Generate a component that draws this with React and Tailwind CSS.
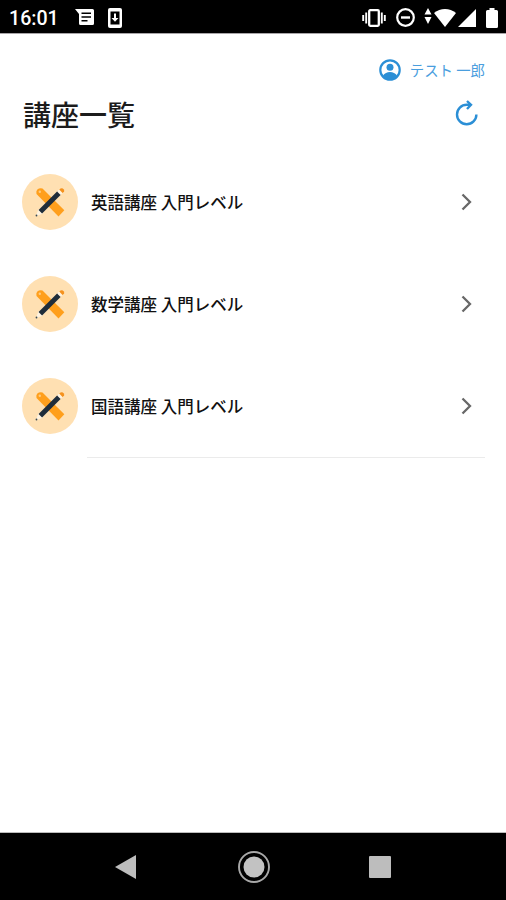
const courses = [
  { id: 1, name: "英語講座 入門レベル" },
  { id: 2, name: "数学講座 入門レベル" },
  { id: 3, name: "国語講座 入門レベル" },
];

function StatusBar() {
  return (
    <div className="h-[34px] shrink-0 bg-black border-b border-[#a8a5a8] flex items-center justify-between pl-[9px] pr-[8px] text-white">
      <div className="flex items-center pt-[2px]">
        <span className="w-[66px] pt-[2px] text-[19.600px] leading-5 font-medium font-[Roboto,sans-serif]">
          16:01
        </span>
        <svg width="19" height="17" viewBox="0 0 19 17" className="mr-[14px]">
          <path fill="#fff" d="M0 0h17.500Q19 0 19 1.500v13q0 1.500-1.500 1.500H5.500Q4 16 4 14.500V5z" />
          <path stroke="#000" strokeWidth="1.600" d="M6.500 4.300h9.500M6.500 8h9.500M6.500 11.700h6" />
        </svg>
        <svg width="14" height="20" viewBox="0 0 14 20">
          <rect width="14" height="20" rx="2" fill="#fff" />
          <rect x="2.500" y="3.500" width="9" height="13" fill="#000" />
          <path fill="#fff" d="M6 5.500h2V10h2.500L7 13.800 3.500 10H6z" />
        </svg>
      </div>
      <div className="flex items-center pt-[2px]">
        <svg width="24" height="18" viewBox="0 0 24 18" className="mr-[10px]">
          <rect x="7.200" y="1.200" width="9.600" height="15.600" rx="1" fill="none" stroke="#fff" strokeWidth="2.300" />
          <path stroke="#fff" strokeWidth="1.900" d="M4.200 3.500v11M19.800 3.500v11M1.200 6v6M22.800 6v6" />
        </svg>
        <svg width="19" height="19" viewBox="0 0 19 19" className="mr-[9px]">
          <circle cx="9.500" cy="9.500" r="8.300" fill="none" stroke="#fff" strokeWidth="2.200" />
          <path stroke="#fff" strokeWidth="2.400" d="M5 9.500h9" />
        </svg>
        <svg width="8" height="16" viewBox="0 0 8 16" className="mr-[2px] mb-[3px]">
          <path fill="#fff" d="M4 0l3.500 6.500h-7zM4 16L.5 9h7z" />
        </svg>
        <svg width="22" height="18" viewBox="0 0 22 18" className="mr-[2px]">
          <path fill="#fff" d="M11 18L0 4Q5 0 11 0t11 4z" />
        </svg>
        <svg width="18" height="18" viewBox="0 0 18 18" className="mr-[10px]">
          <path fill="#fff" d="M18 0v18H0z" />
        </svg>
        <svg width="12" height="20" viewBox="0 0 12 20">
          <path fill="#fff" d="M3.500 0h5v2h2Q12 2 12 3.500v15q0 1.500-1.500 1.500h-9Q0 20 0 18.500v-15Q0 2 1.500 2h2z" />
        </svg>
      </div>
    </div>
  );
}

function CourseIcon() {
  return (
    <div className="size-14 shrink-0 rounded-full bg-[#ffe0b2]">
      <svg width="56" height="56" viewBox="0 0 56 56">
        <path fill="#ff9f1c" d="M20.500 14.500L42.300 36.300 36.500 42.500 14.500 20q-.7-3 .8-4.500 2.200-1.800 5.200-1z" />
        <circle cx="17.800" cy="17.800" r="1.200" fill="#ffcc80" />
        <path fill="#fff3e0" d="M13.800 42.200l2.800-7.200 4.500 4.500z" />
        <path stroke="#1f2d3a" strokeWidth="5" d="M18.300 37.700L37.300 18.700" />
        <path stroke="#fff3e0" strokeWidth="5" d="M36.800 19.200l2-2" />
        <path fill="#f5921e" d="M37.300 15.400q1.500-1.500 3.500-1 2 .8 1.300 3l-1.500 1.500z" />
        <circle cx="14.500" cy="41.500" r=".9" fill="#37474f" />
      </svg>
    </div>
  );
}

function CourseRow({ course }) {
  return (
    <div className="h-[102px] flex items-center">
      <CourseIcon />
      <span className="ml-[13px] mb-px flex-1 text-[16.500px] leading-6 font-medium text-[#111]">
        {course.name}
      </span>
      <svg width="12" height="18" viewBox="0 0 12 18" className="mr-[12px]">
        <path fill="none" stroke="#686868" strokeWidth="2.300" d="M1.500 1.500L9 9l-7.500 7.500" />
      </svg>
    </div>
  );
}

function NavBar() {
  return (
    <div className="h-[68px] shrink-0 bg-black border-t border-[#bcbcbc] grid grid-cols-[115px_22px_101px_32px_99px_22px] items-center">
      <svg width="22" height="24" viewBox="0 0 22 24" className="col-start-2">
        <path fill="#bdbdbd" d="M21 0v24L0 12z" />
      </svg>
      <svg width="32" height="32" viewBox="0 0 32 32" className="col-start-4">
        <circle cx="16" cy="16" r="15" fill="none" stroke="#a8a8a8" strokeWidth="1.900" />
        <circle cx="16" cy="16" r="10.500" fill="#c2c2c2" />
      </svg>
      <div className="col-start-6 size-[22px] rounded-[1px] bg-[#bdbdbd]" />
    </div>
  );
}

export default function App() {
  return (
    <div className="w-full h-[900px] flex flex-col bg-white font-['Noto_Sans_CJK_JP',sans-serif]">
      <StatusBar />
      <main className="flex-1 pl-[22px] pr-[21px]">
        <div className="mt-6 h-6 flex items-center justify-end text-[#2b8fd6]">
          <svg width="22" height="22" viewBox="0 0 22 22" className="mr-[9px]">
            <circle cx="11" cy="11" r="9.700" fill="none" stroke="currentColor" strokeWidth="2.200" />
            <circle cx="11" cy="8.300" r="3.500" fill="currentColor" />
            <path fill="currentColor" d="M4 16.500q2.500-3.500 7-3.500t7 3.500q-2.500 4-7 4t-7-4z" />
          </svg>
          <span className="text-[14.400px] leading-6 text-[#4a9ede]">テスト 一郎</span>
        </div>
        <div className="mt-[12px] h-10 flex items-center justify-between">
          <h1 className="ml-[1px] text-[28px] leading-10 font-medium text-[#1c1c1c]">
            講座一覧
          </h1>
          <svg width="24" height="26" viewBox="0 0 24 26" className="mr-[6px] mb-[3px]">
            <path fill="none" stroke="#2b8fd6" strokeWidth="2.400" d="M21.400 14.500A9.700 9.700 0 1 1 11.700 4.800H16" />
            <path fill="none" stroke="#2b8fd6" strokeWidth="2.400" d="M12 1L16 4.800 12 9" />
          </svg>
        </div>
        <div className="mt-[17px]">
          {courses.map((course) => (
            <CourseRow key={course.id} course={course} />
          ))}
          <div className="ml-[65px] h-px bg-[#ebebeb]" />
        </div>
      </main>
      <NavBar />
    </div>
  );
}
